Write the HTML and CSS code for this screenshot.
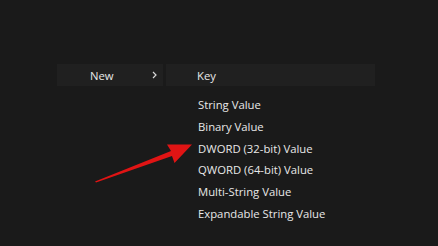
FILE: index.html
```html
<!DOCTYPE html>
<html lang="en">
<head>
    <meta charset="UTF-8">
    <title>New Value</title>
    <link rel="stylesheet" href="styles.css">
</head>
<body>
    <div class="menu">
        <div class="menu-row">
            <div class="item item-new">
                <span>New</span>
                <svg class="chevron" width="5" height="8" viewBox="0 0 5 8"><path d="M1 1 L4 4 L1 7" fill="none" stroke="#d8d8d8" stroke-width="1.2"/></svg>
            </div>
            <div class="item item-key">Key</div>
        </div>
        <ul class="values">
            <li>String Value</li>
            <li>Binary Value</li>
            <li>DWORD (32-bit) Value</li>
            <li>QWORD (64-bit) Value</li>
            <li>Multi-String Value</li>
            <li>Expandable String Value</li>
        </ul>
    </div>

    <svg class="pointer" width="438" height="246" viewBox="0 0 438 246">
        <path d="M95 181.5 L171 151 L167 144.5 L192 144.5 L174.5 163 L172 156 L96 182.5 Z" fill="#e01414"/>
    </svg>
</body>
</html>
```

FILE: styles.css
```css
body {
    margin: 0;
    background-color: #1a1a1a;
    font-family: 'Open Sans', 'Noto Sans', sans-serif;
    font-size: 11.3px;
    color: #e8e8e8;
    width: 438px;
    height: 246px;
    overflow: hidden;
    position: relative;
}

.menu {
    padding: 64px 0 0 57px;
}

.menu-row {
    display: flex;
    gap: 3px;
    height: 22px;
}

.item {
    background: #202020;
    display: flex;
    align-items: center;
}

.item-new {
    width: 106px;
    padding-left: 33px;
    box-sizing: border-box;
    justify-content: space-between;
    padding-right: 6px;
}

.item-key {
    width: 209px;
    padding-left: 31px;
    box-sizing: border-box;
}

.chevron {
    display: block;
}

.values {
    list-style: none;
    margin: 8px 0 0 141px;
    padding: 0;
}

.values li {
    height: 21.8px;
    line-height: 21.8px;
}

.pointer {
    position: absolute;
    left: 0;
    top: 0;
}
```
